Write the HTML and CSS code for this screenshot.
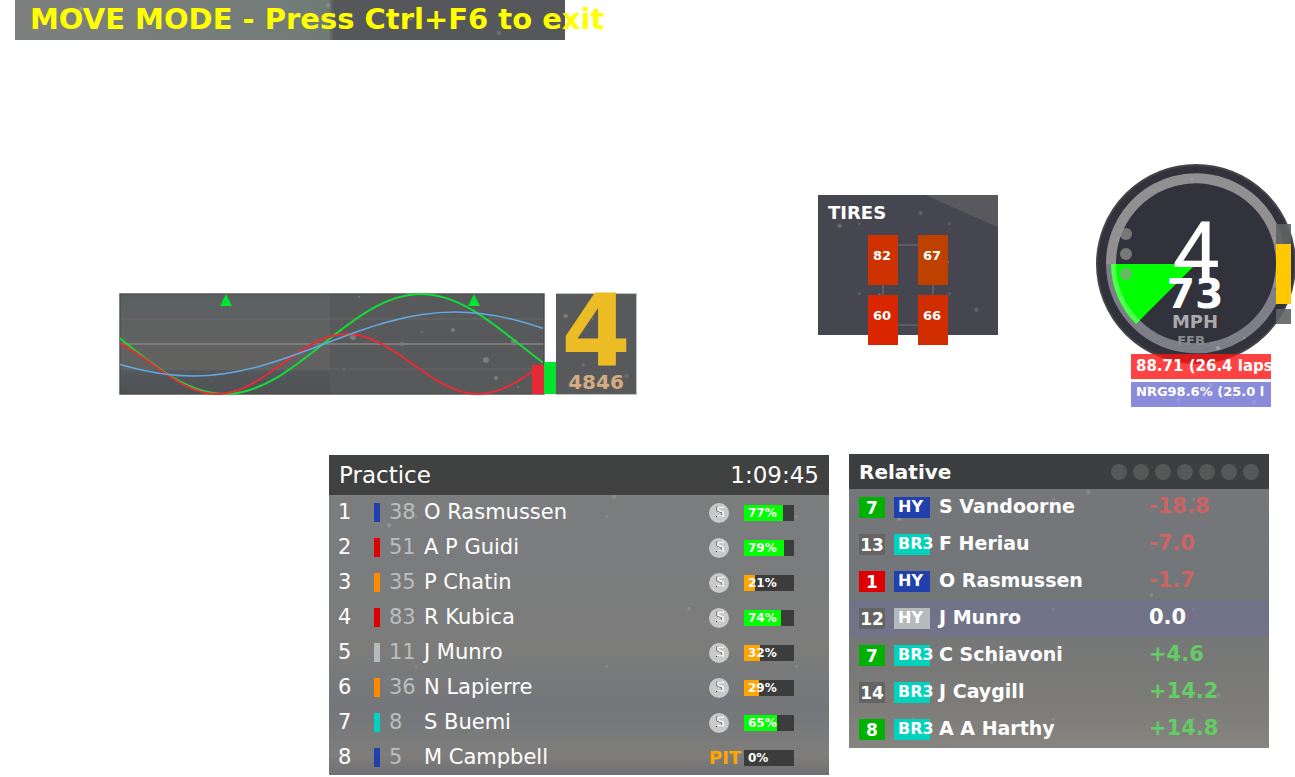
FILE: index.html
```html
<!DOCTYPE html>
<html lang="en">
<head>
<meta charset="utf-8">
<title>Race HUD</title>
<link rel="stylesheet" href="styles.css">
</head>
<body>
<svg class="defs" aria-hidden="true">
  <symbol id="tyre" viewBox="0 0 20 20">
    <circle cx="10" cy="10" r="10" fill="#c9c9c9"/>
    <path d="M14 3.500H8V8L13 9.500V13.500H7" fill="none" stroke="#333" stroke-width="1"/>
    <path d="M15 4H9V7.500L14 9V13H8" fill="none" stroke="#fff" stroke-width="1.500"/>
  </symbol>
</svg>
<main class="hud">
  <header class="widget banner"><h1>MOVE MODE - Press Ctrl+F6 to exit</h1></header>

  <section class="widget inputs" aria-label="Pedals">
    <svg class="trace" viewBox="119 291 437 105">
      <defs>
        <linearGradient id="haze" x2="0" y2="1"><stop offset="0" stop-color="#5a6061"/><stop offset=".5" stop-color="#626262"/><stop offset=".72" stop-color="#626160"/><stop offset=".78" stop-color="#54585b"/><stop offset="1" stop-color="#4f5153"/></linearGradient>
        <clipPath id="plot"><rect x="120" y="290" width="423" height="106"/></clipPath>
      </defs>
      <rect x="119" y="293" width="426" height="102" fill="#c0c0c0"/>
      <rect x="120" y="294" width="424" height="100" fill="#58595b"/>
      <rect x="120" y="294" width="210" height="100" fill="url(#haze)"/>
      <g fill="#7c7c79"><circle cx="453" cy="330" r="2"/><circle cx="422" cy="332" r="1"/><circle cx="402" cy="344" r="2"/><circle cx="514" cy="342" r="3"/><circle cx="486" cy="360" r="3"/><circle cx="496" cy="378" r="2"/><circle cx="353" cy="337" r="3"/><circle cx="344" cy="369" r="1"/><circle cx="359" cy="297" r="1"/><circle cx="518" cy="387" r="1"/></g>
      <path d="M120 319H544M120 369H544" stroke="#67696a"/>
      <path d="M120 344H544" stroke="#7b7b7b" stroke-width="2"/>
      <rect x="120" y="294" width="424" height="100" fill="none" stroke="#444"/>
      <g clip-path="url(#plot)" fill="none">
        <path d="M29 294C100 294 154 394 225 394S350 294 421 294S546 394 617 394" stroke="#12dc38" stroke-width="2"/>
        <path d="M87 334C134 334 170 394 217 394S300 334 347 334S431 394 478 394S561 334 608 334" stroke="#e82b37" stroke-width="2"/>
        <path d="M-69 312C26 312 98 376 193 376S360 312 455 312S622 376 717 376" stroke="#62a9e5" stroke-width="1.500"/>
      </g>
      <path d="M226 294L232 306H220ZM474 294L480 306H468Z" fill="#00e432"/>
      <rect x="532" y="365" width="12" height="29" fill="#e62937"/>
      <rect x="545" y="290" width="11" height="72" fill="#fff"/>
      <rect x="544" y="362" width="12" height="32" fill="#00e430"/>
    </svg>
    <div class="gearbox"><strong class="gear">4</strong><span class="rpm">4846</span></div>
  </section>

  <section class="widget tires">
    <h2>TIRES</h2>
    <div class="axles"><span class="tire hot">82</span><span class="tire warm">67</span><span class="tire max">60</span><span class="tire hot2">66</span></div>
  </section>

  <section class="widget dash" aria-label="Speed">
    <svg viewBox="1096 163 200 204">
      <circle cx="1196" cy="264" r="99" fill="#32323c" stroke="#454547" stroke-width="2"/>
      <path d="M1111 264A85 85 0 1 1 1277 289" fill="none" stroke="#918f90" stroke-width="10"/>
      <path d="M1277 289A85 85 0 0 1 1111 264" fill="none" stroke="#7d7e88" stroke-width="10"/>
      <path d="M1196 264H1111A85 85 0 0 0 1136 324Z" fill="#0f0"/>
      <path d="M1113.500 264A82.500 82.500 0 0 0 1138 322" fill="none" stroke="#50ff50" stroke-width="5"/>
      <g fill="#999996" opacity=".68"><circle cx="1126" cy="234" r="6"/><circle cx="1126" cy="254" r="6"/><circle cx="1126" cy="274" r="6"/></g>
      <g fill="#a1a1a6"><circle cx="1192" cy="179" r="1.500"/><circle cx="1218" cy="348" r="2"/><circle cx="1244" cy="338" r="1"/><circle cx="1275" cy="238" r="1"/></g>
      <path d="M1276 224H1291V244H1276ZM1276 309H1291V324H1276Z" fill="#626363" opacity=".9"/>
      <rect x="1276" y="244" width="15" height="60" fill="#ffc800"/>
      <g text-anchor="middle">
        <text class="dial-gear" x="1196" y="281">4</text>
        <text class="dial-speed" x="1195" y="308">73</text>
        <text class="dial-unit" x="1195" y="328">MPH</text>
        <text class="dial-ffb" x="1191" y="345">FFB</text>
      </g>
    </svg>
  </section>
  <section class="widget reserves" aria-label="Fuel and energy">
    <p class="fuel">88.71 (26.4 laps</p>
    <p class="energy">NRG98.6% (25.0 l</p>
  </section>

  <section class="widget standings">
    <header><h2>Practice</h2><time>1:09:45</time></header>
    <table>
      <colgroup><col class="c-pos"><col class="c-mark"><col class="c-num"><col><col class="c-tyre"><col class="c-bar"></colgroup>
      <tbody>
      <tr><td>1</td><td><i class="mark blue"></i></td><td class="num">38</td><td>O Rasmussen</td><td><svg class="tyre"><use href="#tyre"/></svg></td><td><div class="charge"><i class="good" style="width:77%"></i><b>77%</b></div></td></tr>
      <tr><td>2</td><td><i class="mark red"></i></td><td class="num">51</td><td>A P Guidi</td><td><svg class="tyre"><use href="#tyre"/></svg></td><td><div class="charge"><i class="good" style="width:79%"></i><b>79%</b></div></td></tr>
      <tr><td>3</td><td><i class="mark orange"></i></td><td class="num">35</td><td>P Chatin</td><td><svg class="tyre"><use href="#tyre"/></svg></td><td><div class="charge"><i class="low" style="width:21%"></i><b>21%</b></div></td></tr>
      <tr><td>4</td><td><i class="mark red"></i></td><td class="num">83</td><td>R Kubica</td><td><svg class="tyre"><use href="#tyre"/></svg></td><td><div class="charge"><i class="good" style="width:74%"></i><b>74%</b></div></td></tr>
      <tr><td>5</td><td><i class="mark silver"></i></td><td class="num">11</td><td>J Munro</td><td><svg class="tyre"><use href="#tyre"/></svg></td><td><div class="charge"><i class="low" style="width:32%"></i><b>32%</b></div></td></tr>
      <tr><td>6</td><td><i class="mark orange"></i></td><td class="num">36</td><td>N Lapierre</td><td><svg class="tyre"><use href="#tyre"/></svg></td><td><div class="charge"><i class="low" style="width:29%"></i><b>29%</b></div></td></tr>
      <tr><td>7</td><td><i class="mark teal"></i></td><td class="num">8</td><td>S Buemi</td><td><svg class="tyre"><use href="#tyre"/></svg></td><td><div class="charge"><i class="good" style="width:65%"></i><b>65%</b></div></td></tr>
      <tr><td>8</td><td><i class="mark blue"></i></td><td class="num">5</td><td>M Campbell</td><td class="pit">PIT</td><td><div class="charge"><b>0%</b></div></td></tr>
      </tbody>
    </table>
  </section>

  <section class="widget relative">
    <header><h2>Relative</h2><div class="lights"><i></i><i></i><i></i><i></i><i></i><i></i><i></i></div></header>
    <table>
      <colgroup><col class="r-pos"><col class="r-class"><col><col class="r-gap"></colgroup>
      <tbody>
      <tr><td><span class="tag green">7</span></td><td><span class="tag class blue">HY</span></td><td>S Vandoorne</td><td class="ahead">-18.8</td></tr>
      <tr><td><span class="tag gray">13</span></td><td><span class="tag class teal">BR3</span></td><td>F Heriau</td><td class="ahead">-7.0</td></tr>
      <tr><td><span class="tag red">1</span></td><td><span class="tag class blue">HY</span></td><td>O Rasmussen</td><td class="ahead">-1.7</td></tr>
      <tr class="me"><td><span class="tag gray">12</span></td><td><span class="tag class silver">HY</span></td><td>J Munro</td><td>0.0</td></tr>
      <tr><td><span class="tag green">7</span></td><td><span class="tag class teal">BR3</span></td><td>C Schiavoni</td><td class="behind">+4.6</td></tr>
      <tr><td><span class="tag gray">14</span></td><td><span class="tag class teal">BR3</span></td><td>J Caygill</td><td class="behind">+14.2</td></tr>
      <tr><td><span class="tag green">8</span></td><td><span class="tag class teal">BR3</span></td><td>A A Harthy</td><td class="behind">+14.8</td></tr>
      </tbody>
    </table>
  </section>
</main>
</body>
</html>
```
FILE: styles.css
```css
:root {
  --specks:
    radial-gradient(circle at 12% 22%, rgba(215,212,195,.28) 0 1px, transparent 3px),
    radial-gradient(circle at 34% 71%, rgba(215,212,195,.2) 0 1px, transparent 2px),
    radial-gradient(circle at 57% 13%, rgba(215,212,195,.2) 0 1px, transparent 3px),
    radial-gradient(circle at 72% 48%, rgba(215,212,195,.25) 0 1px, transparent 2px),
    radial-gradient(circle at 88% 82%, rgba(215,212,195,.2) 0 1px, transparent 3px),
    radial-gradient(circle at 46% 41%, rgba(215,212,195,.15) 0 1px, transparent 2px);
}
* { box-sizing: border-box; }
body { margin: 0; background: #fff; color: #fff; font-family: "DejaVu Sans", Verdana, sans-serif; }
h1, h2, p { margin: 0; }
.defs { position: absolute; width: 0; height: 0; }
.hud { position: relative; min-height: 100vh; overflow: hidden; }
.widget { position: absolute; }

.banner {
  left: 15px; top: 0; width: 550px; height: 40px; padding: 0 15px;
  background: var(--specks) 320px 0 / 190px 110px no-repeat, linear-gradient(90deg, #7e7f7f, #707b78 57%, #56575a 58%);
}
.banner h1 { color: #ff0; font-size: 29px; line-height: 38px; white-space: nowrap; }

.inputs { left: 119px; top: 291px; display: flex; align-items: flex-start; }
.trace { width: 437px; height: 105px; display: block; }
.gearbox {
  display: flex; flex-direction: column; align-items: center; width: 81px; height: 102px; margin-top: 2px;
  border: 1px solid #c0c0c0; border-left-width: 0; background: var(--specks) 0 0 / 80px 60px, #58595b;
}
.gear { color: #ecbc24; font-size: 100px; line-height: 74px; }
.rpm { color: #d3ad80; font-size: 20px; line-height: 28px; font-weight: bold; }

.tires {
  left: 818px; top: 195px; width: 180px; height: 140px; padding: 6px 10px;
  background: linear-gradient(204deg, #58585d 0 29px, transparent 30px), var(--specks) 0 0 / 90px 70px, #464650;
}
.tires h2 { font-size: 18px; line-height: 24px; }
.axles {
  display: grid; grid-template-columns: 30px 30px; grid-auto-rows: 50px; gap: 10px 20px; justify-content: center; margin-top: 10px;
  background:
    linear-gradient(#5c5c64, #5c5c64) 50% 9px / 20px 2px no-repeat,
    linear-gradient(#5c5c64, #5c5c64) 50% 89px / 20px 2px no-repeat,
    linear-gradient(#5c5c64, #5c5c64) 54px 50% / 2px 10px no-repeat,
    linear-gradient(#5c5c64, #5c5c64) 104px 50% / 2px 10px no-repeat;
}
.tire { padding-left: 5px; font-size: 13px; line-height: 41px; font-weight: bold; }
.hot { background: #cd3200; }
.warm { background: #be4100; }
.max { background: #d92500; }
.hot2 { background: #d22d00; }

.dash { left: 1096px; top: 163px; }
.dash svg { display: block; width: 200px; height: 204px; }
.dash text { fill: #fff; font-weight: bold; }
.dash .dial-gear { font: 84px Roboto, sans-serif; }
.dash .dial-speed { font-size: 41px; }
.dash .dial-unit { font-size: 18px; fill: #aaa; }
.dash .dial-ffb { font-size: 13px; fill: #8c8c8f; }
.reserves { left: 1131px; top: 354px; width: 140px; display: grid; gap: 3px; font-weight: bold; }
.reserves p { height: 25px; padding-left: 5px; overflow: hidden; white-space: nowrap; }
.fuel { background: rgba(255,20,20,.8); font-size: 15px; line-height: 24px; }
.energy { background: var(--specks) 0 0 / 70px 40px, #8b8bdc; font-size: 13px; line-height: 20px; }

.standings { left: 329px; top: 455px; width: 500px; background: var(--specks) 0 0 / 190px 150px, linear-gradient(#7d7e7e, #7a7c7d 30%, #7c7c7b 60%, #74767a 80%, #7f7e7c 94%, #6f7073); }
.standings header, .relative header { display: flex; align-items: center; justify-content: space-between; padding: 0 10px; background: rgba(20,20,20,.58); }
.standings header { height: 40px; }
.standings h2, .standings time { font-size: 23px; line-height: 38px; font-weight: normal; }
table { width: 100%; table-layout: fixed; border-collapse: collapse; }
td { padding: 0; white-space: nowrap; }
.standings tr { height: 35px; }
.standings td { font-size: 21px; line-height: 35px; }
.standings td:first-child { padding-left: 9px; }
.standings .num { color: #bdbdbd; }
.c-pos { width: 45px; }
.c-mark { width: 15px; }
.c-num { width: 35px; }
.c-tyre { width: 35px; }
.c-bar { width: 85px; }
.mark { display: block; width: 6px; height: 19px; }
.tyre { display: block; width: 20px; height: 20px; }
.standings .pit { color: #ffa500; font-size: 18px; font-weight: bold; }
.charge { display: grid; width: 50px; height: 16px; background: #3c3c3c; font-size: 12px; line-height: 16px; }
.charge > * { grid-area: 1 / 1; }
.charge b { padding-left: 4px; }
.good { background: #0f0; }
.low { background: #ffa500; }

.blue { background: #1f40ad; }
.red { background: #de0000; }
.orange { background: #ff8900; }
.teal { background: #00d2be; }
.silver { background: #b4babd; }
.green { background: #00b200; }
.gray { background: #646464; }

.relative { left: 849px; top: 454px; width: 420px; background: var(--specks) 0 0 / 140px 110px, linear-gradient(#75777a, #737678 50%, #787977 72%, #7c7b78 84%, #858480); }
.relative header { height: 35px; }
.relative h2 { font-size: 20px; line-height: 32px; }
.lights { display: flex; gap: 6px; }
.lights i { width: 16px; height: 16px; border-radius: 50%; background: rgba(255,255,255,.13); }
.relative tr { height: 37px; }
.relative td { padding-bottom: 2px; font-size: 19px; line-height: 35px; font-weight: bold; }
.relative td:first-child { padding-left: 10px; }
.relative td:nth-child(-n+2) { padding-bottom: 0; }
.relative td:last-child { font-size: 21px; }
.r-pos { width: 45px; }
.r-class { width: 45px; }
.r-gap { width: 120px; }
.tag { display: flex; justify-content: center; width: 26px; height: 21px; font-size: 17px; line-height: 23px; }
.class { justify-content: flex-start; width: 36px; padding-left: 4px; font-size: 16px; line-height: 19px; }
.me { background: rgba(110,110,160,.42); }
.relative .ahead { color: #cc6464; }
.relative .behind { color: #64cc64; }
```
